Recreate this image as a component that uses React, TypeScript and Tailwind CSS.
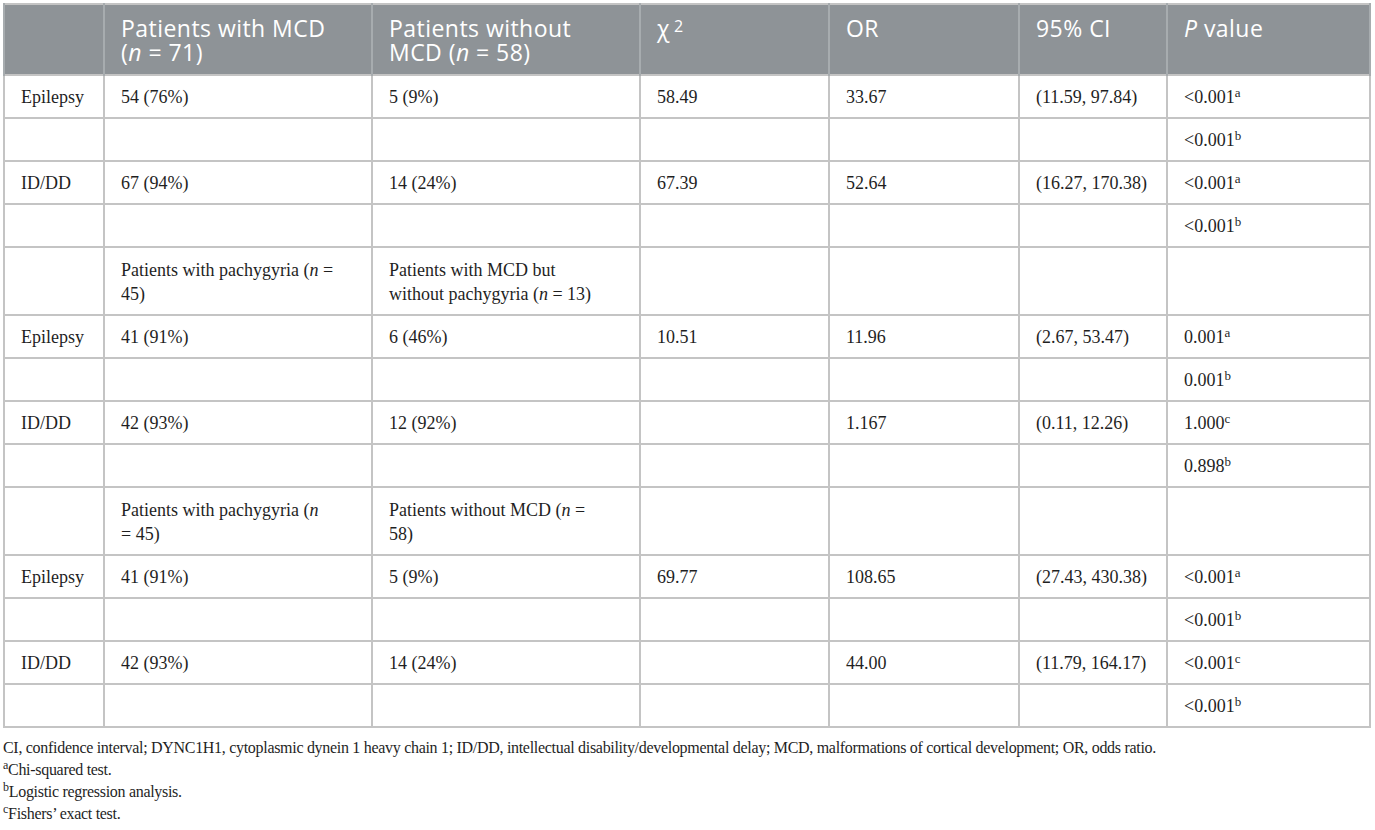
import React from "react";

type Row = {
  label?: string;
  a?: React.ReactNode;
  b?: React.ReactNode;
  chi?: string;
  or?: string;
  ci?: string;
  p?: string;
  sup?: string;
  tall?: boolean;
};

const N = () => <i>n</i>;

const rows: Row[] = [
  { label: "Epilepsy", a: "54 (76%)", b: "5 (9%)", chi: "58.49", or: "33.67", ci: "(11.59, 97.84)", p: "<0.001", sup: "a" },
  { p: "<0.001", sup: "b" },
  { label: "ID/DD", a: "67 (94%)", b: "14 (24%)", chi: "67.39", or: "52.64", ci: "(16.27, 170.38)", p: "<0.001", sup: "a" },
  { p: "<0.001", sup: "b" },
  {
    tall: true,
    a: (
      <>
        Patients with pachygyria (<N /> =<br />
        45)
      </>
    ),
    b: (
      <>
        Patients with MCD but
        <br />
        without pachygyria (<N /> = 13)
      </>
    ),
  },
  { label: "Epilepsy", a: "41 (91%)", b: "6 (46%)", chi: "10.51", or: "11.96", ci: "(2.67, 53.47)", p: "0.001", sup: "a" },
  { p: "0.001", sup: "b" },
  { label: "ID/DD", a: "42 (93%)", b: "12 (92%)", or: "1.167", ci: "(0.11, 12.26)", p: "1.000", sup: "c" },
  { p: "0.898", sup: "b" },
  {
    tall: true,
    a: (
      <>
        Patients with pachygyria (<N />
        <br />= 45)
      </>
    ),
    b: (
      <>
        Patients without MCD (<N /> =<br />
        58)
      </>
    ),
  },
  { label: "Epilepsy", a: "41 (91%)", b: "5 (9%)", chi: "69.77", or: "108.65", ci: "(27.43, 430.38)", p: "<0.001", sup: "a" },
  { p: "<0.001", sup: "b" },
  { label: "ID/DD", a: "42 (93%)", b: "14 (24%)", or: "44.00", ci: "(11.79, 164.17)", p: "<0.001", sup: "c" },
  { p: "<0.001", sup: "b" },
];

export default function App() {
  const th = "align-top text-left font-normal px-[16px] pt-[11px] pb-[8px] border-x-2 border-[#a7acaf]";
  const td = "px-[16px] pt-[9px] pb-[8px] border-2 border-[#c4c4c4] whitespace-nowrap";

  return (
    <div className="bg-white w-[1375px] h-[830px] pt-[3px] px-[3px] text-[#1f1f1f]">
      <table className="table-fixed border-collapse w-[1368px] font-['Liberation_Serif',serif] text-[18px] leading-[24px]">
        <colgroup>
          <col className="w-[100px]" />
          <col className="w-[268px]" />
          <col className="w-[268px]" />
          <col className="w-[189px]" />
          <col className="w-[190px]" />
          <col className="w-[148px]" />
          <col className="w-[203px]" />
        </colgroup>
        <thead>
          <tr className="bg-[#8e9397] text-white font-['Open_Sans',sans-serif] text-[23px] leading-[24px] tracking-[0.02em] h-[71px] border-2 border-[#c4c4c4]">
            <th className={th}></th>
            <th className={th}>
              Patients with MCD
              <br />(<i>n</i> = 71)
            </th>
            <th className={th}>
              Patients without
              <br />
              MCD (<i>n</i> = 58)
            </th>
            <th className={th}>
              χ<sup className="text-[16px] relative -top-[5px] ml-[4px]">2</sup>
            </th>
            <th className={th}>OR</th>
            <th className={th}>95% CI</th>
            <th className={th}>
              <i>P</i> value
            </th>
          </tr>
        </thead>
        <tbody>
          {rows.map((r, i) => (
            <tr key={i} className={r.tall ? "h-[68px]" : ""}>
              <td className={td}>{r.label}</td>
              <td className={td}>{r.a}</td>
              <td className={td}>{r.b}</td>
              <td className={td}>{r.chi}</td>
              <td className={td}>{r.or}</td>
              <td className={td}>{r.ci}</td>
              <td className={td}>
                {r.p}
                {r.sup && <sup className="text-[13px]">{r.sup}</sup>}
              </td>
            </tr>
          ))}
        </tbody>
      </table>

      {/* footnotes */}
      <div className="font-['Liberation_Serif',serif] text-[16px] leading-[22px] tracking-[-0.3px] pt-[9px] text-[#1f1f1f]">
        <p>
          CI, confidence interval; DYNC1H1, cytoplasmic dynein 1 heavy chain 1; ID/DD, intellectual disability/developmental delay; MCD, malformations of cortical development; OR, odds ratio.
        </p>
        <p>
          <sup className="text-[12px]">a</sup>Chi-squared test.
        </p>
        <p>
          <sup className="text-[12px]">b</sup>Logistic regression analysis.
        </p>
        <p>
          <sup className="text-[12px]">c</sup>Fishers’ exact test.
        </p>
      </div>
    </div>
  );
}
